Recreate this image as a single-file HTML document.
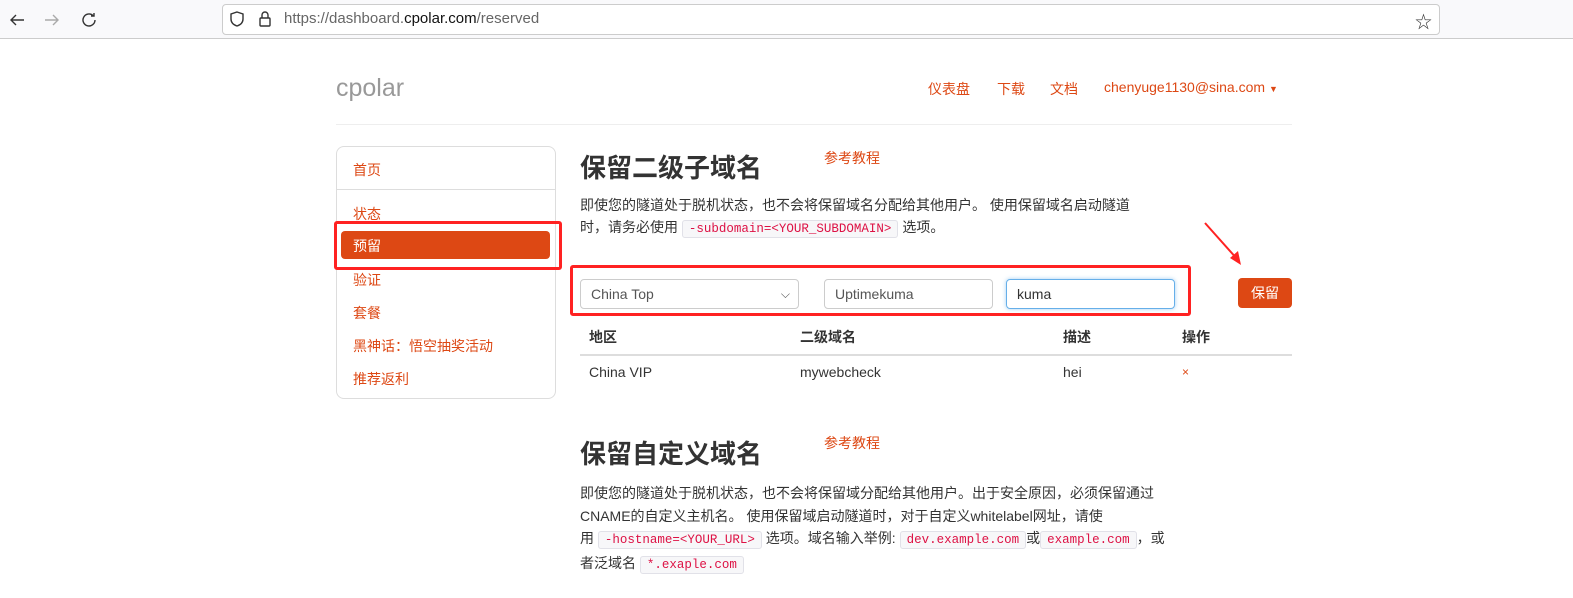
<!DOCTYPE html>
<html><head><meta charset="utf-8"><style>
*{margin:0;padding:0;box-sizing:border-box}
body{width:1573px;height:598px;position:relative;background:#fff;font-family:"Liberation Sans","Noto Sans CJK SC",sans-serif;color:#333;overflow:hidden;font-size:14px}
.a{position:absolute;white-space:nowrap}
.o{color:#dd4814}
code{font-family:"Liberation Mono",monospace;font-size:12.5px;color:#d14;background:#f7f7f9;border:1px solid #e1e1e8;border-radius:3px;padding:1px 6px}
.p{line-height:22px;font-size:14px;color:#333}
.inp{position:absolute;border:1px solid #ccc;border-radius:4px;height:30px;padding:0 10px;line-height:28px;font-size:14px;color:#555}
.sb{position:absolute;left:353px;font-size:14px;color:#dd4814}
</style></head><body>
<div class="a" style="left:0;top:0;width:1573px;height:39px;background:#f9f9fb;border-bottom:1px solid #ccc"></div>
<svg class="a" style="left:8px;top:11px" width="90" height="18" viewBox="0 0 90 18" fill="none" stroke-width="1.4">
<path d="M16 9H3M8 4L3 9l5 5" stroke="#333"/>
<path d="M37 9h13M45 4l5 5-5 5" stroke="#aaa"/>
<path d="M87 9a6 6 0 1 1-2-4.5M86 2v3h-3" stroke="#333"/>
</svg>
<div class="a" style="left:222px;top:4px;width:1218px;height:31px;background:#fff;border:1px solid #ccc;border-radius:4px"></div>
<svg class="a" style="left:229px;top:10px" width="45" height="18" viewBox="0 0 45 18" fill="none" stroke="#333" stroke-width="1.4">
<path d="M8 2l6 2v5c0 4-3 6-6 7-3-1-6-3-6-7V4z"/>
<rect x="31" y="8" width="10" height="8" rx="1"/><path d="M33 8V5a3 3 0 0 1 6 0v3"/>
</svg>
<div class="a" style="left:284px;top:10px;font-size:15px;color:#666">https://dashboard.<span style="color:#111">cpolar.com</span>/reserved</div>
<div class="a" style="left:1415px;top:8px;font-size:17px;color:#333">☆</div>

<div class="a" style="left:336px;top:74px;font-size:25px;color:#999">cpolar</div>
<div class="a o" style="left:928px;top:79px">仪表盘</div>
<div class="a o" style="left:997px;top:79px">下载</div>
<div class="a o" style="left:1050px;top:79px">文档</div>
<div class="a o" style="left:1104px;top:79px">chenyuge1130@sina.com <span style="font-size:9px">▼</span></div>
<div class="a" style="left:336px;top:124px;width:956px;height:1px;background:#eee"></div>

<div class="a" style="left:336px;top:146px;width:220px;height:253px;border:1px solid #ddd;border-radius:8px"></div>
<div class="sb" style="top:160px">首页</div>
<div class="a" style="left:337px;top:189px;width:218px;height:1px;background:#ddd"></div>
<div class="sb" style="top:204px">状态</div>
<div class="a" style="left:341px;top:231px;width:209px;height:28px;background:#dd4814;border-radius:4px"></div>
<div class="sb" style="top:236px;color:#fff">预留</div>
<div class="sb" style="top:270px">验证</div>
<div class="sb" style="top:303px">套餐</div>
<div class="sb" style="top:336px">黑神话：悟空抽奖活动</div>
<div class="sb" style="top:369px">推荐返利</div>
<div class="a" style="left:334px;top:221px;width:228px;height:49px;border:3px solid #f22;border-radius:3px"></div>

<div class="a" style="left:580px;top:148px;font-size:26px;font-weight:bold;color:#333">保留二级子域名</div>
<div class="a o" style="left:824px;top:148px">参考教程</div>
<div class="a p" style="left:580px;top:194px">即使您的隧道处于脱机状态，也不会将保留域名分配给其他用户。 使用保留域名启动隧道<br>时，请务必使用 <code>-subdomain=&lt;YOUR_SUBDOMAIN&gt;</code> 选项。</div>

<div class="inp" style="left:580px;top:279px;width:219px">China Top<span style="position:absolute;right:8px;top:0;font-size:12px">⌵</span></div>
<div class="inp" style="left:824px;top:279px;width:169px">Uptimekuma</div>
<div class="inp" style="left:1006px;top:279px;width:169px;border-color:#66afe9;box-shadow:0 0 4px rgba(102,175,233,.6);color:#333">kuma</div>
<div class="a" style="left:570px;top:265px;width:621px;height:51px;border:3px solid #f22;border-radius:3px"></div>
<div class="a" style="left:1238px;top:278px;width:54px;height:30px;background:#dd4814;border-radius:4px;color:#fff;text-align:center;line-height:30px">保留</div>
<svg class="a" style="left:1200px;top:218px" width="50" height="52"><path d="M5 5L38 42" stroke="#f22" stroke-width="2"/><path d="M41 47L30 40 38 33z" fill="#f22"/></svg>

<div class="a" style="left:589px;top:327px;font-weight:bold">地区</div>
<div class="a" style="left:800px;top:327px;font-weight:bold">二级域名</div>
<div class="a" style="left:1063px;top:327px;font-weight:bold">描述</div>
<div class="a" style="left:1182px;top:327px;font-weight:bold">操作</div>
<div class="a" style="left:580px;top:354px;width:712px;height:2px;background:#ddd"></div>
<div class="a" style="left:589px;top:364px">China VIP</div>
<div class="a" style="left:800px;top:364px">mywebcheck</div>
<div class="a" style="left:1063px;top:364px">hei</div>
<div class="a o" style="left:1182px;top:365px;font-size:12px">×</div>

<div class="a" style="left:580px;top:434px;font-size:26px;font-weight:bold;color:#333">保留自定义域名</div>
<div class="a o" style="left:824px;top:433px">参考教程</div>
<div class="a p" style="left:580px;top:482px;line-height:22.5px">即使您的隧道处于脱机状态，也不会将保留域分配给其他用户。出于安全原因，必须保留通过<br>CNAME的自定义主机名。 使用保留域启动隧道时，对于自定义whitelabel网址，请使<br>用 <code>-hostname=&lt;YOUR_URL&gt;</code> 选项。域名输入举例: <code>dev.example.com</code>或<code>example.com</code>，或<br>者泛域名 <code>*.exaple.com</code></div>
</body></html>
